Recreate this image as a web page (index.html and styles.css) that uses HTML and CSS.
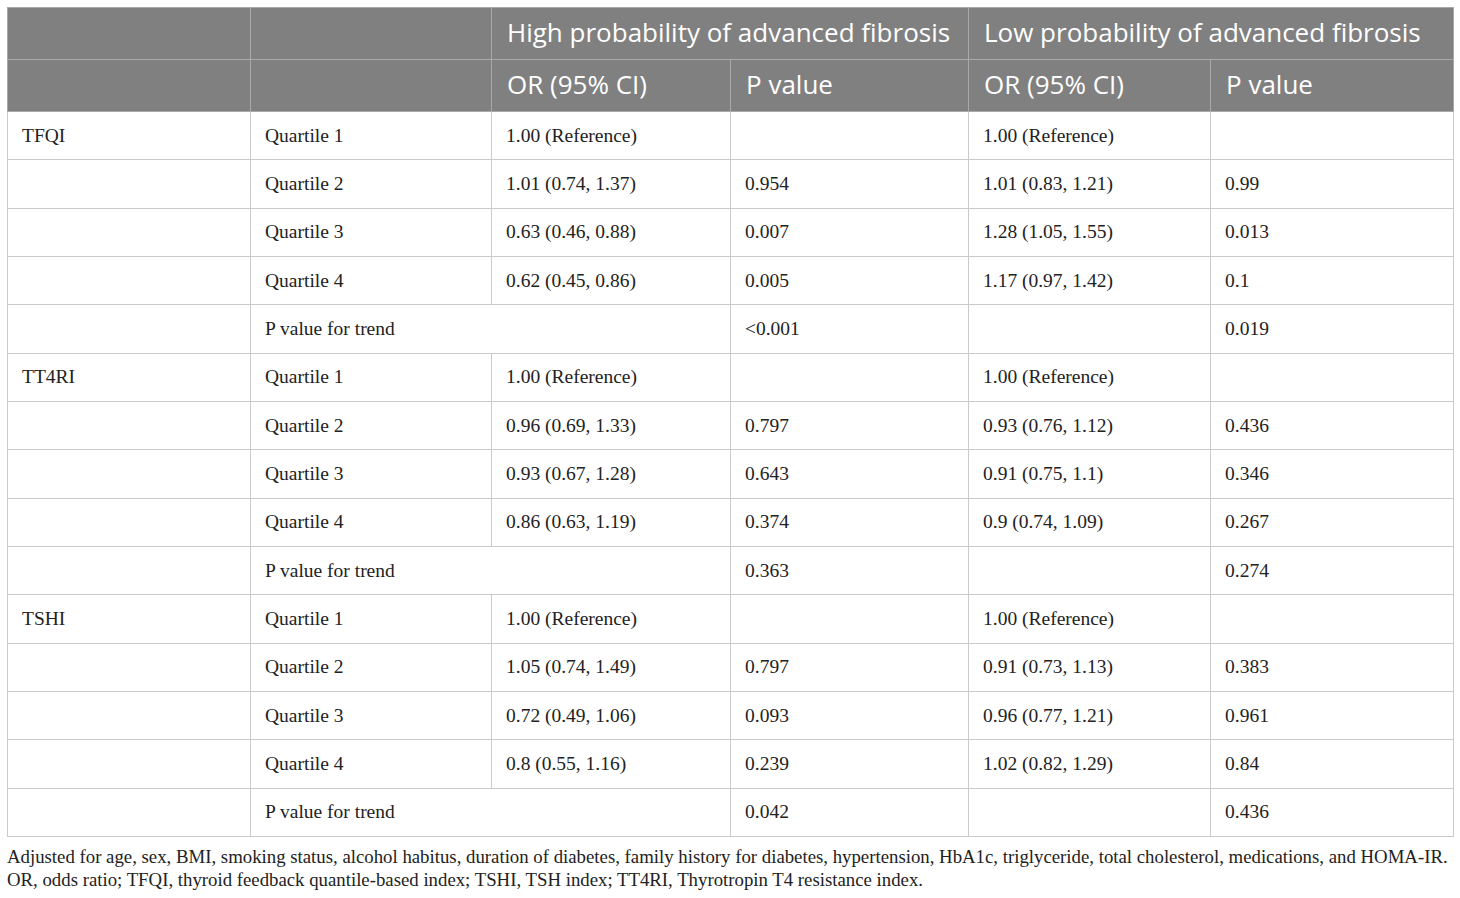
FILE: index.html
```html
<!DOCTYPE html>
<html>
<head>
    <meta charset="utf-8">
    <title>Odds ratios for advanced fibrosis</title>
    <link rel="stylesheet" href="styles.css">
</head>
<body>
    <table class="data-table">
        <colgroup>
            <col class="c1"><col class="c2"><col class="c3"><col class="c4"><col class="c5"><col class="c6">
        </colgroup>
        <thead>
            <tr>
                <th></th>
                <th></th>
                <th colspan="2">High probability of advanced fibrosis</th>
                <th colspan="2">Low probability of advanced fibrosis</th>
            </tr>
            <tr>
                <th></th>
                <th></th>
                <th>OR (95% CI)</th>
                <th>P value</th>
                <th>OR (95% CI)</th>
                <th>P value</th>
            </tr>
        </thead>
        <tbody>
            <!-- TFQI -->
            <tr><td>TFQI</td><td>Quartile 1</td><td>1.00 (Reference)</td><td></td><td>1.00 (Reference)</td><td></td></tr>
            <tr><td></td><td>Quartile 2</td><td>1.01 (0.74, 1.37)</td><td>0.954</td><td>1.01 (0.83, 1.21)</td><td>0.99</td></tr>
            <tr><td></td><td>Quartile 3</td><td>0.63 (0.46, 0.88)</td><td>0.007</td><td>1.28 (1.05, 1.55)</td><td>0.013</td></tr>
            <tr><td></td><td>Quartile 4</td><td>0.62 (0.45, 0.86)</td><td>0.005</td><td>1.17 (0.97, 1.42)</td><td>0.1</td></tr>
            <tr><td></td><td colspan="2">P value for trend</td><td>&lt;0.001</td><td></td><td>0.019</td></tr>
            <!-- TT4RI -->
            <tr><td>TT4RI</td><td>Quartile 1</td><td>1.00 (Reference)</td><td></td><td>1.00 (Reference)</td><td></td></tr>
            <tr><td></td><td>Quartile 2</td><td>0.96 (0.69, 1.33)</td><td>0.797</td><td>0.93 (0.76, 1.12)</td><td>0.436</td></tr>
            <tr><td></td><td>Quartile 3</td><td>0.93 (0.67, 1.28)</td><td>0.643</td><td>0.91 (0.75, 1.1)</td><td>0.346</td></tr>
            <tr><td></td><td>Quartile 4</td><td>0.86 (0.63, 1.19)</td><td>0.374</td><td>0.9 (0.74, 1.09)</td><td>0.267</td></tr>
            <tr><td></td><td colspan="2">P value for trend</td><td>0.363</td><td></td><td>0.274</td></tr>
            <!-- TSHI -->
            <tr><td>TSHI</td><td>Quartile 1</td><td>1.00 (Reference)</td><td></td><td>1.00 (Reference)</td><td></td></tr>
            <tr><td></td><td>Quartile 2</td><td>1.05 (0.74, 1.49)</td><td>0.797</td><td>0.91 (0.73, 1.13)</td><td>0.383</td></tr>
            <tr><td></td><td>Quartile 3</td><td>0.72 (0.49, 1.06)</td><td>0.093</td><td>0.96 (0.77, 1.21)</td><td>0.961</td></tr>
            <tr><td></td><td>Quartile 4</td><td>0.8 (0.55, 1.16)</td><td>0.239</td><td>1.02 (0.82, 1.29)</td><td>0.84</td></tr>
            <tr><td></td><td colspan="2">P value for trend</td><td>0.042</td><td></td><td>0.436</td></tr>
        </tbody>
    </table>
    <div class="table-notes">
        <p>Adjusted for age, sex, BMI, smoking status, alcohol habitus, duration of diabetes, family history for diabetes, hypertension, HbA1c, triglyceride, total cholesterol, medications, and HOMA-IR.</p>
        <p>OR, odds ratio; TFQI, thyroid feedback quantile-based index; TSHI, TSH index; TT4RI, Thyrotropin T4 resistance index.</p>
    </div>
</body>
</html>
```

FILE: styles.css
```css
body {
    margin: 0;
    padding: 7px;
    background: #fff;
    color: #222;
    font-family: "Liberation Serif", "Times New Roman", serif;
}

.data-table {
    width: 1446px;
    border-collapse: collapse;
    table-layout: fixed;
}

.c1 { width: 243px; }
.c2 { width: 241px; }
.c3 { width: 239px; }
.c4 { width: 238px; }
.c5 { width: 242px; }
.c6 { width: 243px; }

.data-table th {
    height: 47px;
    padding: 0 0 4px 15px;
    background: #808080;
    border: 1px solid #a8a8a8;
    color: #fff;
    font-family: "Open Sans", "Noto Sans", sans-serif;
    font-size: 26px;
    font-weight: normal;
    text-align: left;
    white-space: nowrap;
}

.data-table td {
    height: 47.33px;
    padding: 0 0 0 14px;
    border: 1px solid #cacaca;
    font-size: 19.5px;
    text-align: left;
    white-space: nowrap;
}

.table-notes {
    margin-top: 8px;
    font-size: 18.8px;
    line-height: 23px;
    color: #222;
}

.table-notes p {
    margin: 0;
    white-space: nowrap;
}
```
